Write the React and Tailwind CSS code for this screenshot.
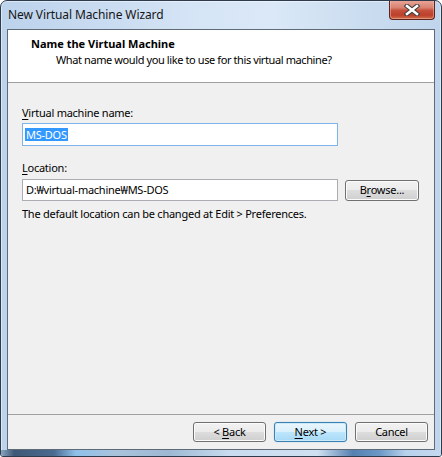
import React from "react";

function Btn({ children, primary, wide }) {
  const base =
    "flex items-center justify-center rounded-[3px] border text-[11px] leading-[14px] text-black";
  const size = wide ? " w-[74px] h-[21px]" : " w-[73px] h-[20px]";
  const skin = primary
    ? " border-[#3c7fb1] bg-[linear-gradient(#eaf6fd_0%,#d9f0fc_50%,#bee6fd_50%,#a7d9f5_100%)] shadow-[inset_0_0_0_1px_#cdeafb,0_0_1px_#7fc4ef]"
    : " border-[#707070] bg-[linear-gradient(#f2f2f2_0%,#ebebeb_50%,#dddddd_50%,#cfcfcf_100%)] shadow-[inset_0_0_0_1px_#fbfbfb]";
  return (
    <div className={base + size + skin}>
      <span className="whitespace-pre">{children}</span>
    </div>
  );
}

function CloseBtn() {
  return (
    <div className="absolute top-[-1px] right-[6px] w-[46px] h-[20px] rounded-b-[4px] border border-t-0 border-[#5b241c] bg-[linear-gradient(#e9a99b_0%,#d98271_40%,#c4503c_55%,#bd3f2b_80%,#d0704e_100%)] shadow-[inset_0_0_0_1px_rgba(255,200,190,0.45)] flex items-center justify-center">
      <svg width="16" height="12" viewBox="0 0 16 12">
        <path d="M3 2 L13 10 M13 2 L3 10" stroke="#3b3b3b" strokeWidth="4.6" strokeLinecap="square" fill="none" />
        <path d="M3 2 L13 10 M13 2 L3 10" stroke="#ffffff" strokeWidth="2.6" strokeLinecap="square" fill="none" />
      </svg>
    </div>
  );
}

function U({ children }) {
  return <span className="underline underline-offset-[2px] decoration-[1px]">{children}</span>;
}

export default function App() {
  return (
    <div className="relative w-[442px] h-[457px] flex flex-col overflow-hidden rounded-t-[7px] rounded-b-[3px] border border-[#2d3b4d] bg-[linear-gradient(90deg,#bcd3ec_0%,#cadcf1_25%,#d6e5f6_45%,#dae8f7_62%,#c8dbef_85%,#c0d5ec_100%)] shadow-[inset_0_0_0_1px_rgba(255,255,255,0.45)] font-['Noto_Sans',sans-serif] text-[11px] tracking-[-0.25px] text-black">
      <div className="h-[28px] flex items-center pl-[7px] text-[12px] tracking-[-0.1px] text-[#161616] leading-[16px]">
        New Virtual Machine Wizard
      </div>
      <CloseBtn />
      <div className="mx-[6px] flex-1 flex flex-col border border-[#5f6a78] bg-[#f0f0f0]">
        <div className="h-[53px] bg-white border-b border-[#a0a0a0] pt-[6px] leading-[16px]">
          <div className="pl-[23px] font-bold tracking-[0px]">Name the Virtual Machine</div>
          <div className="pl-[48px] tracking-[-0.4px]">What name would you like to use for this virtual machine?</div>
        </div>
        <div className="flex-1 flex flex-col px-[14px] pt-[22px]">
          <div className="leading-[16px]">
            <U>V</U>irtual machine name:
          </div>
          <div className="mt-[2px] w-[316px] h-[23px] border border-[#7eb4ea] bg-white flex items-center pl-[2px]">
            <span className="bg-[#3399ff] text-white leading-[13px] px-[1px]">MS-DOS</span>
          </div>
          <div className="mt-[14px] leading-[16px]">
            <U>L</U>ocation:
          </div>
          <div className="mt-[3px] flex items-center gap-[7px]">
            <div className="w-[316px] h-[22px] border border-[#abadb3] bg-white flex items-center pl-[3px] leading-[16px]">
              D:₩virtual-machine₩MS-DOS
            </div>
            <Btn wide>
              B<U>r</U>owse...
            </Btn>
          </div>
          <div className="mt-[5px] leading-[16px]">
            The default location can be changed at Edit &gt; Preferences.
          </div>
        </div>
        <div className="h-[35px] border-t border-[#a0a0a0] flex justify-end items-start gap-[8px] pt-[7px] pr-[6px]">
          <Btn>
            {"< "}
            <U>B</U>ack
          </Btn>
          <Btn primary>
            <U>N</U>
            {"ext >"}
          </Btn>
          <Btn>Cancel</Btn>
        </div>
      </div>
      <div className="h-[6px] bg-[linear-gradient(90deg,#8aa4c0_0%,#3f5876_3%,#4a6a90_12%,#8fc0ea_17%,#a9c3dc_26%,#9db8d3_38%,#c9dcef_52%,#cfe0f1_72%,#5680b0_80%,#6b98c6_86%,#b9d2ec_92%,#c4d8ee_100%)]" />
    </div>
  );
}
